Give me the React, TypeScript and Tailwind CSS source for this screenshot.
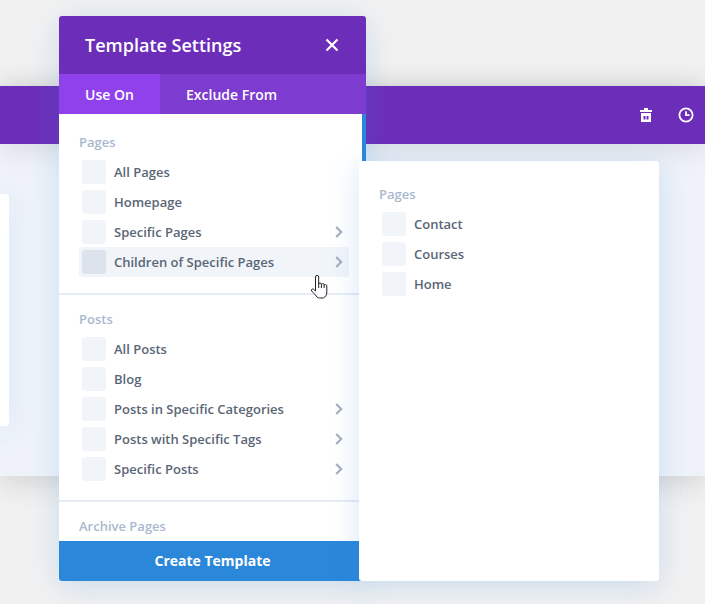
import { ReactNode } from 'react';

// Small grey arrow at the end of a row
function Arrow() {
  return (
    <svg width="8" height="12" viewBox="0 0 8 12" fill="none" stroke="#a3b0c2" strokeWidth="2.2">
      <path d="M1.2 1l5 5-5 5" />
    </svg>
  );
}

// A row in one of the template lists
function Row({ label, arrow = false, active = false }: { label: string; arrow?: boolean; active?: boolean }) {
  return (
    <div className={`ml-5 w-[270px] h-[30px] pl-[3px] pr-[6px] flex items-center rounded-[3px] ${active ? 'bg-[#f1f5f9]' : ''}`}>
      <span className={`w-6 h-6 rounded-[3px] ${active ? 'bg-[#dde3ec]' : 'bg-[#f1f5f9]'}`} />
      <span className="ml-2 flex-1 pt-px text-[13px] font-semibold text-[#5a6675]">{label}</span>
      {arrow && <Arrow />}
    </div>
  );
}

function Label({ children, className = '' }: { children: string; className?: string }) {
  return <div className={`h-5 leading-5 text-[13px] font-semibold text-[#a9b8ce] ${className}`}>{children}</div>;
}

// Section of the left list: label, rows, then a divider
function Section({ title, first = false, children }: { title: string; first?: boolean; children: ReactNode }) {
  return (
    <div className={`pb-4 border-b-2 border-[#e6ecf5] ${first ? 'pt-[18px]' : 'pt-[14px]'}`}>
      <Label className="ml-5 mb-[5px]">{title}</Label>
      {children}
    </div>
  );
}

export default function App() {
  return (
    <div className="relative w-[705px] h-[604px] overflow-hidden bg-[#f1f1f1] font-['Open_Sans',sans-serif]">
      {/* Builder page behind the modal */}
      <div className="pt-[86px] h-[476px] flex flex-col">
        <div className="flex-1 flex flex-col shadow-[0_5px_30px_rgba(0,0,0,0.14)]">
          <div className="relative h-[58px] bg-[#6c2eb9] flex items-center justify-end pr-[11px] gap-[25px] text-white shadow-[0_5px_30px_rgba(0,0,0,0.1)]">
            <svg width="14" height="14" viewBox="0 0 14 14" fill="currentColor">
              <path d="M5 0h4v2h4v2H1V2h4z" />
              <path fillRule="evenodd" d="M2 5h10v9H2zM4.5 8v3.5h2V8zM7.5 8v3.5h2V8z" />
            </svg>
            <svg width="16" height="16" viewBox="0 0 16 16" fill="none" stroke="currentColor" strokeWidth="1.8">
              <circle cx="8" cy="8" r="6.6" />
              <path d="M8 4.2V8.2H11.6" />
            </svg>
          </div>
          <div className="flex-1 bg-[#eff3f9] pt-[50px]">
            <div className="w-[9px] h-[232px] bg-white rounded-r-[3px] shadow-[0_5px_30px_rgba(43,135,218,0.2)]" />
          </div>
        </div>
      </div>

      {/* Template Settings modal */}
      <div className="absolute left-[59px] top-4 w-[307px] h-[565px] flex flex-col rounded-[3px] overflow-hidden bg-white shadow-[0_5px_30px_rgba(43,135,218,0.2)]">
        <div className="h-[58px] shrink-0 bg-[#6c2eb9] pl-[26px] pr-[27px] flex items-center justify-between text-white">
          <span className="text-[18px] font-semibold">Template Settings</span>
          <svg width="14" height="14" viewBox="0 0 14 14" fill="none" stroke="currentColor" strokeWidth="2.2">
            <path d="M1.5 1.5l11 11M12.5 1.5l-11 11" />
          </svg>
        </div>
        <div className="h-10 shrink-0 bg-[#7d3bcf] flex text-white text-[14px] font-semibold">
          <div className="w-[101px] bg-[#8f42ec] pl-[26px] flex items-center">Use On</div>
          <div className="pl-[26px] flex items-center">Exclude From</div>
        </div>
        <div className="flex-1 min-h-0 flex">
          <div className="w-[300px] overflow-hidden">
            <Section title="Pages" first>
              <Row label="All Pages" />
              <Row label="Homepage" />
              <Row label="Specific Pages" arrow />
              <Row label="Children of Specific Pages" arrow active />
            </Section>
            <Section title="Posts">
              <Row label="All Posts" />
              <Row label="Blog" />
              <Row label="Posts in Specific Categories" arrow />
              <Row label="Posts with Specific Tags" arrow />
              <Row label="Specific Posts" arrow />
            </Section>
            <div className="pt-[14px]">
              <Label className="ml-5">Archive Pages</Label>
            </div>
          </div>
          <div className="ml-[3px] w-1 h-[120px] bg-[#2b87da]" />
        </div>
        <div className="h-10 shrink-0 bg-[#2b87da] flex items-center justify-center pb-px text-white text-[14px] font-bold">
          Create Template
        </div>
      </div>

      {/* Flyout with the specific pages */}
      <div className="absolute left-[359px] top-[161px] w-[300px] h-[420px] bg-white rounded-[3px] pt-[23px] shadow-[0_5px_30px_rgba(43,135,218,0.2)]">
        <Label className="ml-5 mb-[5px]">Pages</Label>
        <Row label="Contact" />
        <Row label="Courses" />
        <Row label="Home" />
      </div>

      {/* Mouse pointer */}
      <svg className="absolute left-[310px] top-[274px]" width="20" height="25" viewBox="0 0 20 25" fill="#fff" stroke="#222" strokeWidth="1" strokeLinejoin="round">
        <path d="M5.5 13V3a1.6 1.6 0 0 1 3.2 0v7c0-1.3 2.7-1.3 2.7 0v.6c0-1.3 2.7-1.3 2.7 0v.8c0-1.3 2.7-1.1 2.7.4V18c0 3-1.3 5-3.5 6H9.5c-2 0-3-1.4-4-3L1.6 17c-.9-1.2.8-2.8 2-1.7L5.5 17z" />
        <path d="M8.7 10v4M11.4 10.6v3.4M14.1 11.4v2.6" fill="none" />
      </svg>
    </div>
  );
}
